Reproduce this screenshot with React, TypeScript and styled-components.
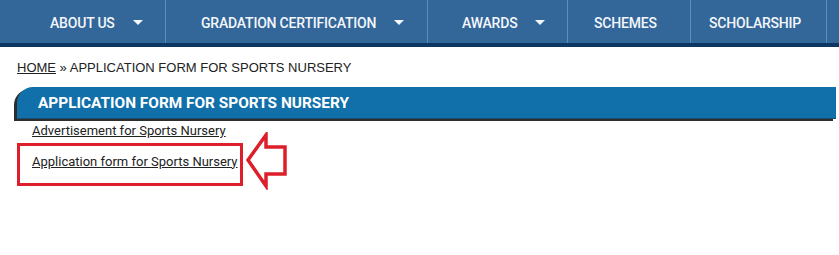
import React, { FC } from "react";
import styled, { createGlobalStyle } from "styled-components";

const GlobalStyle = createGlobalStyle`
  body {
    margin: 0;
    background: #fff;
    font-family: Roboto, "Liberation Sans", sans-serif;
  }
`;

const NavBar = styled.nav`
  display: flex;
  height: 43px;
  background: #336699;
  border-bottom: 4px solid #0b3762;
`;

const NavItem = styled.div<{ $w: number; $pl: number; $sep?: boolean }>`
  display: flex;
  align-items: center;
  gap: 18px;
  box-sizing: border-box;
  width: ${({ $w }) => $w}px;
  padding-left: ${({ $pl }) => $pl}px;
  padding-top: 2px;
  border-left: ${({ $sep }) => ($sep ? "1px solid #5a8cc2" : "none")};
  color: #f4f7fb;
  font-size: 14px;
  font-weight: 500;
  letter-spacing: -0.2px;
  white-space: nowrap;
`;

const Caret = styled.span`
  width: 0;
  height: 0;
  border-left: 5px solid transparent;
  border-right: 5px solid transparent;
  border-top: 5px solid #f4f7fb;
`;

const Main = styled.main`
  padding: 13px 3px 0 17px;
`;

const Crumbs = styled.div`
  font-family: "Liberation Sans", Arial, sans-serif;
  font-size: 13px;
  color: #222;
  a {
    color: #222;
    text-decoration: underline;
  }
`;

const Heading = styled.h1`
  margin: 12px 0 0;
  height: 30px;
  display: flex;
  align-items: center;
  padding: 1px 0 0 21px;
  background: #1170a9;
  border-bottom: 1px solid #185075;
  border-top-left-radius: 16px;
  box-shadow: -3px 2px 0 #2d2d2d;
  color: #fff;
  font-size: 15.4px;
  font-weight: 700;
`;

const LinkList = styled.div`
  display: flex;
  flex-direction: column;
  padding-top: 4px;
`;

const Row = styled.div`
  display: flex;
  align-items: center;
`;

const DocLink = styled.a<{ $boxed?: boolean }>`
  display: inline-block;
  box-sizing: border-box;
  color: #222;
  font-size: 13px;
  line-height: 15px;
  white-space: nowrap;
  text-decoration: underline;
  padding: ${({ $boxed }) => ($boxed ? "8px 2px 14px 12px" : "0 0 0 15px")};
  border: ${({ $boxed }) => ($boxed ? "3px solid #dd1f2b" : "none")};
  width: ${({ $boxed }) => ($boxed ? "226px" : "auto")};
`;

const Arrow: FC = () => (
  <svg width="44" height="58" viewBox="0 0 44 58" style={{ marginLeft: 2, marginTop: -6 }}>
    <polygon
      points="3,28 21,3 21,15 40,15 40,42 21,42 21,54"
      fill="#fff"
      stroke="#dd1f2b"
      strokeWidth="3.5"
      strokeLinejoin="miter"
    />
  </svg>
);

const App: FC = () => (
  <>
    <GlobalStyle />
    <NavBar>
      <NavItem $w={165} $pl={50}>
        ABOUT US <Caret />
      </NavItem>
      <NavItem $w={262} $pl={35} $sep>
        GRADATION CERTIFICATION <Caret />
      </NavItem>
      <NavItem $w={140} $pl={34} $sep>
        AWARDS <Caret />
      </NavItem>
      <NavItem $w={123} $pl={26} $sep>
        SCHEMES
      </NavItem>
      <NavItem $w={136} $pl={18} $sep>
        SCHOLARSHIP
      </NavItem>
      <NavItem $w={13} $pl={0} $sep />
    </NavBar>
    <Main>
      <Crumbs>
        <a href="#">HOME</a> » APPLICATION FORM FOR SPORTS NURSERY
      </Crumbs>
      <Heading>APPLICATION FORM FOR SPORTS NURSERY</Heading>
      <LinkList>
        <Row>
          <DocLink href="#">Advertisement for Sports Nursery</DocLink>
        </Row>
        <Row>
          <DocLink href="#" $boxed>
            Application form for Sports Nursery
          </DocLink>
          <Arrow />
        </Row>
      </LinkList>
    </Main>
  </>
);

export default App;
